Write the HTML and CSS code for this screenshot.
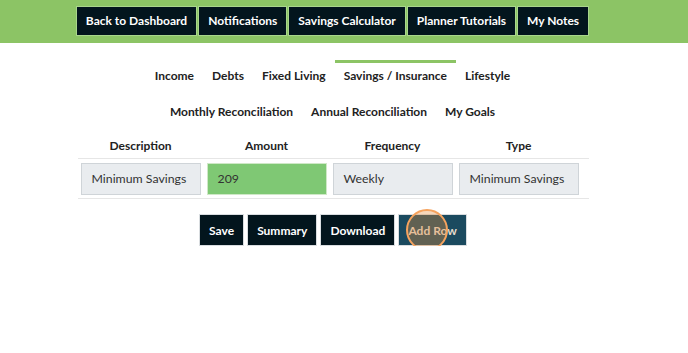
FILE: index.html
```html
<!DOCTYPE html>
<html>
<head>
<meta charset="utf-8">
<link rel="stylesheet" href="styles.css">
</head>
<body>
<header class="topbar">
  <nav class="topnav">
    <a class="navbtn">Back to Dashboard</a>
    <a class="navbtn">Notifications</a>
    <a class="navbtn">Savings Calculator</a>
    <a class="navbtn">Planner Tutorials</a>
    <a class="navbtn">My Notes</a>
  </nav>
</header>
<main class="page">
  <div class="tabs">
    <span class="tab">Income</span>
    <span class="tab">Debts</span>
    <span class="tab">Fixed Living</span>
    <span class="tab active">Savings / Insurance</span>
    <span class="tab">Lifestyle</span>
  </div>
  <div class="tabs second">
    <span class="tab">Monthly Reconciliation</span>
    <span class="tab">Annual Reconciliation</span>
    <span class="tab">My Goals</span>
  </div>
  <div class="table">
    <div class="thead">
      <div class="th">Description</div>
      <div class="th">Amount</div>
      <div class="th">Frequency</div>
      <div class="th">Type</div>
    </div>
    <div class="trow">
      <div class="td"><div class="field">Minimum Savings</div></div>
      <div class="td"><div class="field green">209</div></div>
      <div class="td"><div class="field">Weekly</div></div>
      <div class="td"><div class="field">Minimum Savings</div></div>
    </div>
  </div>
  <div class="actions">
    <button class="btn">Save</button>
    <button class="btn">Summary</button>
    <button class="btn">Download</button>
    <button class="btn teal">Add Row<span class="click"></span></button>
  </div>
</main>
</body>
</html>
```
FILE: styles.css
```css
html, body {
  margin: 0;
  padding: 0;
  background: #ffffff;
  font-family: Lato, "Noto Sans", sans-serif;
  color: #222;
}
body { width: 688px; }
.topbar {
  background: #8cc465;
  height: 43px;
  width: 688px;
  box-sizing: border-box;
  padding-top: 6px;
}
.topnav {
  width: 665px;
  display: flex;
  justify-content: center;
  gap: 1px;
}
.navbtn {
  background: #03151d;
  color: #fff;
  font-size: 12px;
  font-weight: 700;
  height: 30px;
  line-height: 28px;
  padding: 0 9px;
  border: 1px solid #a9d68c;
  box-sizing: border-box;
}
.page {
  width: 665px;
  display: flex;
  flex-direction: column;
  align-items: center;
}
.tabs {
  display: flex;
  justify-content: center;
  margin-top: 17px;
  height: 33px;
}
.tabs.second { margin-top: 3px; }
.tab {
  font-size: 12px;
  font-weight: 700;
  color: #222;
  padding: 5px 9px 0;
  height: 24px;
  line-height: 16px;
  box-sizing: border-box;
  border-top: 3px solid transparent;
}
.tab.active {
  border-top-color: #8cc465;
}
.table {
  width: 511px;
  margin-top: 1px;
  margin-left: 1px;
}
.thead, .trow {
  display: grid;
  grid-template-columns: repeat(4, 126px);
}
.thead {
  height: 29px;
  border-bottom: 1px solid #e6e6e6;
  box-sizing: border-box;
}
.th {
  text-align: center;
  font-size: 12px;
  font-weight: 700;
  line-height: 16px;
  padding-top: 8px;
}
.trow {
  padding: 4px 0 3px;
  border-bottom: 1px solid #e6e6e6;
}
.td {
  display: flex;
  justify-content: center;
}
.field {
  width: 120px;
  height: 32px;
  box-sizing: border-box;
  background: #e9ecef;
  border: 1px solid #cfd4d8;
  font-size: 12.3px;
  line-height: 30px;
  padding-left: 10px;
  color: #333;
}
.field.green {
  background: #7fc874;
  border-color: #cfe8c7;
}
.actions {
  display: flex;
  gap: 3px;
  margin-top: 15px;
  margin-left: 1px;
}
.btn {
  position: relative;
  background: #03151d;
  color: #fff;
  border: 1px solid #d9dde0;
  height: 32px;
  padding: 0 9px;
  font-family: Lato, "Noto Sans", sans-serif;
  font-size: 12px;
  font-weight: 700;
}
.btn.teal {
  background: #1b4a5f;
  color: #e6dccd;
}
.click {
  position: absolute;
  left: 7px;
  top: -6px;
  width: 42px;
  height: 42px;
  border-radius: 50%;
  border: 2px solid #f6a35e;
  background: rgba(230, 140, 60, 0.35);
  box-sizing: border-box;
}
```
